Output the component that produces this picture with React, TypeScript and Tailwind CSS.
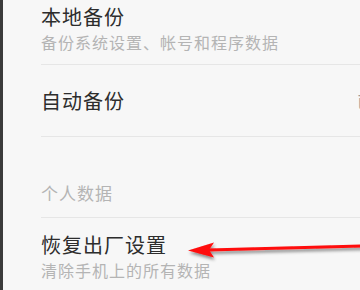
import React from 'react';

const font = { fontFamily: '"Noto Sans CJK SC", "Noto Sans", sans-serif' };

function Arrow() {
  return (
    <svg className="absolute left-0 top-0 pointer-events-none" width="360" height="290" viewBox="0 0 360 290">
      <defs>
        <filter id="sh" x="-10%" y="-50%" width="120%" height="200%">
          <feDropShadow dx="1" dy="2.5" stdDeviation="1.5" floodColor="#000" floodOpacity="0.45" />
        </filter>
      </defs>
      <g filter="url(#sh)">
        <path d="M362 244.5 L208 248.5 L208 251.5 L362 247.5 Z" fill="#ff0a0a" />
        <path d="M188 250.5 L214 242.5 L209 250 L214 257.5 Z" fill="#ff0a0a" />
      </g>
    </svg>
  );
}

export default function App() {
  return (
    <div className="relative w-[360px] h-[290px] overflow-hidden flex bg-[#f7f7f7]" style={font}>
      <div className="w-[3px] shrink-0 bg-[#3b3b3b]" />
      <div className="flex-1 flex flex-col overflow-hidden">
        {/* 本地备份 */}
        <div className="pl-[38px]">
          <div className="pt-[4px] pb-[11px] border-b border-[#e6e6e6]">
            <div className="text-[20px] leading-[26px] tracking-[1px] text-[#2d2d2d]">本地备份</div>
            <div className="mt-[1px] text-[16px] leading-[22px] tracking-[1px] text-[#b4b4b4]">备份系统设置、帐号和程序数据</div>
          </div>
        </div>

        {/* 自动备份 */}
        <div className="pl-[38px]">
          <div className="h-[72px] flex items-center border-b border-[#e6e6e6]">
            <div className="w-[316px] shrink-0 text-[20px] leading-[26px] tracking-[1px] text-[#2d2d2d]">自动备份</div>
            <span className="shrink-0 whitespace-nowrap text-[16px] text-[#9a9a9a]">已关闭</span>
          </div>
        </div>

        {/* 个人数据 */}
        <div className="pl-[38px]">
          <div className="pt-[45px] pb-[13px] border-b border-[#e6e6e6]">
            <div className="text-[17px] leading-[22px] tracking-[1px] text-[#b4b4b4]">个人数据</div>
          </div>
        </div>

        {/* 恢复出厂设置 */}
        <div className="pl-[38px] pt-[14px]">
          <div className="text-[20px] leading-[26px] tracking-[1px] text-[#2d2d2d]">恢复出厂设置</div>
          <div className="mt-[1px] text-[16px] leading-[22px] tracking-[1px] text-[#b4b4b4]">清除手机上的所有数据</div>
        </div>
      </div>
      <Arrow />
    </div>
  );
}
